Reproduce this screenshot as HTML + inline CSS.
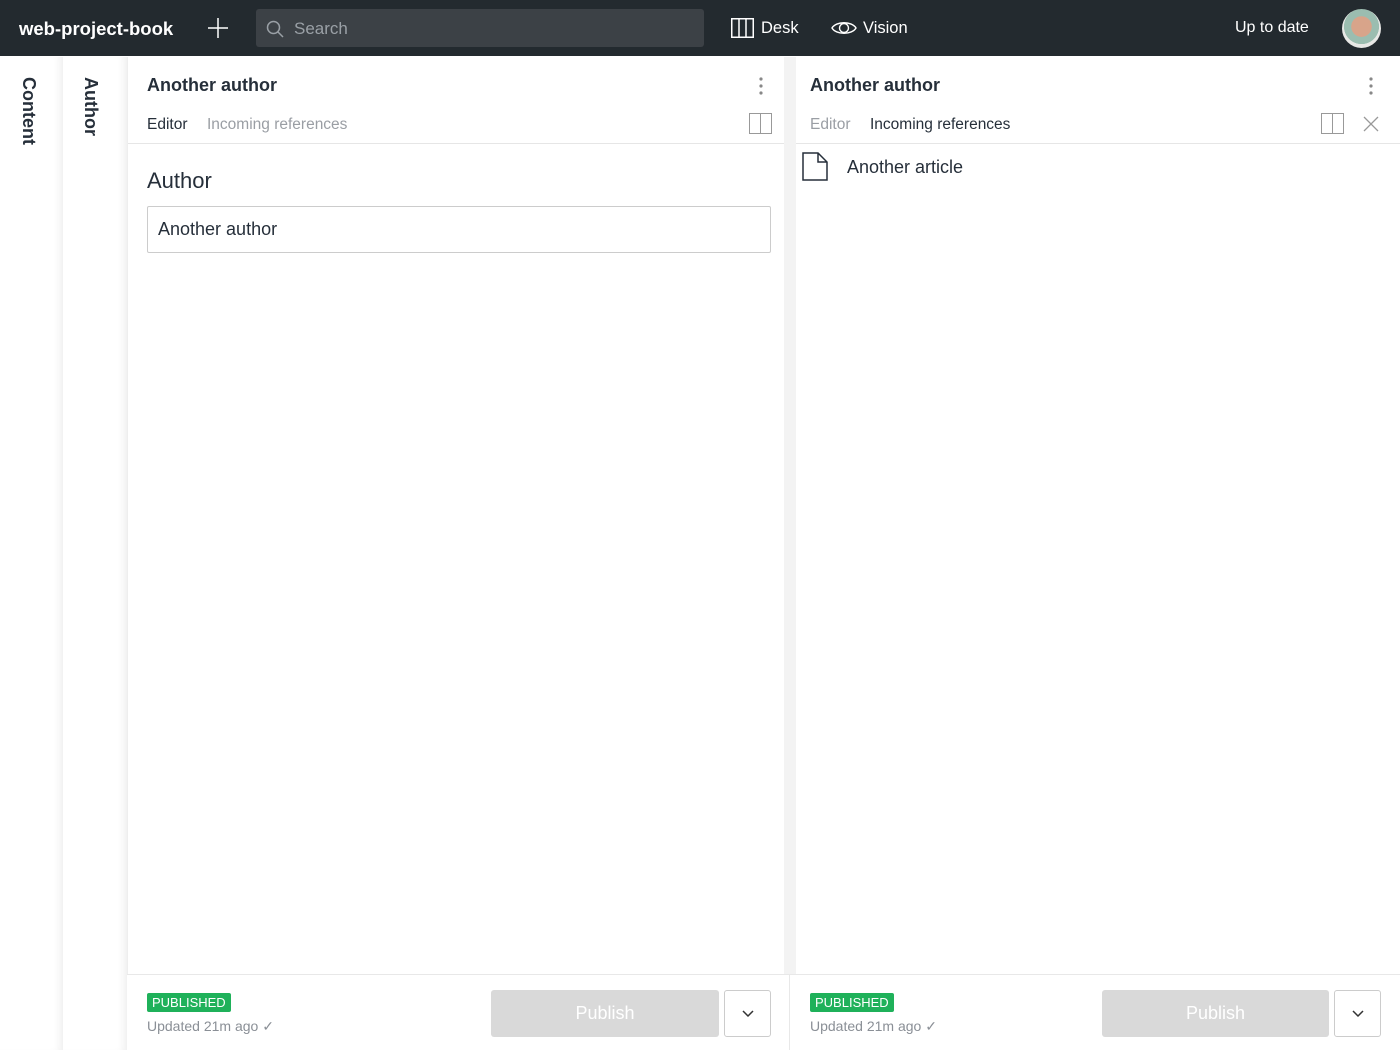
<!DOCTYPE html>
<html><head><meta charset="utf-8">
<style>
*{box-sizing:border-box;margin:0;padding:0}
body{width:1400px;height:1050px;overflow:hidden;font-family:"Liberation Sans",sans-serif;background:#fff;position:relative;color:#262f3a}
.top{position:absolute;left:0;top:0;width:1400px;height:56px;background:#232a2f;color:#fff}
.top .t{position:absolute;top:19px;font-size:17px}
.search{position:absolute;left:256px;top:9px;width:448px;height:38px;background:#3c4146;border-radius:3px}
.strip{position:absolute;top:57px;height:993px;width:64px;background:#fff;box-shadow:inset -8px 0 8px -5px rgba(0,0,0,.07)}
.vt{position:absolute;top:20px;font-size:18px;font-weight:bold;writing-mode:vertical-rl;color:#262f3a}
.h1{position:absolute;font-size:18px;font-weight:bold;top:75px}
.tab{position:absolute;top:116px;font-size:15.5px;font-weight:500}
.sep{position:absolute;left:784px;top:57px;width:12px;height:917px;background:#f3f3f3}
.hline{position:absolute;top:143px;height:1px;background:#e6e6e6}
.foot{position:absolute;top:974px;height:76px;border-top:1px solid #e8e8e8;background:#fff}
.badge{position:absolute;top:18px;left:20px;background:#1fb15a;color:#fff;font-size:13px;padding:2px 5px;border-radius:2px;height:19px;line-height:15px;font-weight:500}
.upd{position:absolute;top:43px;left:20px;color:#8a8f96;font-size:14px}
.pub{position:absolute;top:15px;height:47px;background:#d9d9d9;border-radius:3px;color:#fff;font-size:18px;text-align:center;line-height:47px}
.dd{position:absolute;top:15px;width:47px;height:47px;border:1px solid #ccc;border-radius:3px;background:#fff}
</style></head><body>
<div class="top">
<div class="t" style="left:19px;font-size:18.5px;top:18px;font-weight:600">web-project-book</div>
<svg style="position:absolute;left:207px;top:17px" width="22" height="22"><path d="M11 1V21M1 11H21" stroke="#fff" stroke-width="1.5"/></svg>
<div class="search"><svg style="position:absolute;left:10px;top:11px" width="18" height="18"><circle cx="7.5" cy="7.5" r="6" stroke="#9aa0a6" stroke-width="1.5" fill="none"/><path d="M12 12L17 17" stroke="#9aa0a6" stroke-width="1.5"/></svg><span style="position:absolute;left:38px;top:10px;font-size:17px;color:#9aa0a6">Search</span></div>
<svg style="position:absolute;left:731px;top:18px" width="23" height="20"><rect x=".75" y=".75" width="21.5" height="18.5" fill="none" stroke="#fff" stroke-width="1.5"/><path d="M8 1V19M15 1V19" stroke="#fff" stroke-width="1.5"/></svg>
<div class="t" style="left:761px;font-size:16.5px">Desk</div>
<svg style="position:absolute;left:831px;top:19px" width="26" height="18"><path d="M1 9C5 2 21 2 25 9C21 16 5 16 1 9Z" fill="none" stroke="#fff" stroke-width="1.4"/><circle cx="13" cy="9" r="4.5" fill="none" stroke="#fff" stroke-width="1.4"/></svg>
<div class="t" style="left:863px;font-size:16.5px">Vision</div>
<div class="t" style="left:1235px;font-size:16px">Up to date</div>
<div style="position:absolute;left:1342px;top:9px;width:39px;height:39px;border-radius:50%;background:radial-gradient(circle at 50% 45%,#d8a48a 0 35%,#9bbdb0 36% 60%,#e8e8e6 61%)"></div>
</div>
<div class="strip" style="left:0;width:63px"><div class="vt" style="left:18px">Content</div></div>
<div class="strip" style="left:63px"><div class="vt" style="left:17px">Author</div></div>
<div style="position:absolute;left:127px;top:57px;width:1px;height:993px;background:#eee"></div>
<div class="h1" style="left:147px">Another author</div>
<svg style="position:absolute;left:758px;top:76px" width="6" height="20"><circle cx="3" cy="3" r="1.6" fill="#888"/><circle cx="3" cy="10" r="1.6" fill="#888"/><circle cx="3" cy="17" r="1.6" fill="#888"/></svg>
<div class="tab" style="left:147px">Editor</div>
<div class="tab" style="left:207px;color:#9a9ea4">Incoming references</div>
<svg style="position:absolute;left:749px;top:113px" width="24" height="22"><rect x=".5" y=".5" width="22" height="20" fill="none" stroke="#999"/><path d="M11.5 1V21" stroke="#999"/></svg>
<div class="hline" style="left:128px;width:656px"></div>
<div style="position:absolute;left:147px;top:168px;font-size:22px">Author</div>
<div style="position:absolute;left:147px;top:206px;width:624px;height:47px;border:1px solid #ccc;border-radius:2px;font-size:18px;padding:12px 10px">Another author</div>
<div class="sep"></div>
<div class="h1" style="left:810px">Another author</div>
<svg style="position:absolute;left:1368px;top:76px" width="6" height="20"><circle cx="3" cy="3" r="1.6" fill="#888"/><circle cx="3" cy="10" r="1.6" fill="#888"/><circle cx="3" cy="17" r="1.6" fill="#888"/></svg>
<div class="tab" style="left:810px;color:#9a9ea4">Editor</div>
<div class="tab" style="left:870px">Incoming references</div>
<svg style="position:absolute;left:1321px;top:113px" width="24" height="22"><rect x=".5" y=".5" width="22" height="20" fill="none" stroke="#999"/><path d="M11.5 1V21" stroke="#999"/></svg>
<svg style="position:absolute;left:1363px;top:116px" width="16" height="16"><path d="M1 1L15 15M15 1L1 15" stroke="#999" stroke-width="1.3"/></svg>
<div class="hline" style="left:796px;width:604px"></div>
<svg style="position:absolute;left:802px;top:152px" width="26" height="29"><path d="M1 1H16L25 10V28H1Z M16 1V10H25" fill="none" stroke="#262f3a" stroke-width="1.5"/></svg>
<div style="position:absolute;left:847px;top:157px;font-size:18px">Another article</div>
<div class="foot" style="left:127px;width:663px;border-right:1px solid #e8e8e8">
<div class="badge">PUBLISHED</div><div class="upd">Updated 21m ago ✓</div>
<div class="pub" style="left:364px;width:228px">Publish</div>
<div class="dd" style="left:597px"><svg style="position:absolute;left:17px;top:19px" width="12" height="8"><path d="M1 1L6 6L11 1" fill="none" stroke="#333" stroke-width="1.5"/></svg></div>
</div>
<div class="foot" style="left:790px;width:610px">
<div class="badge">PUBLISHED</div><div class="upd">Updated 21m ago ✓</div>
<div class="pub" style="left:312px;width:227px">Publish</div>
<div class="dd" style="left:544px"><svg style="position:absolute;left:17px;top:19px" width="12" height="8"><path d="M1 1L6 6L11 1" fill="none" stroke="#333" stroke-width="1.5"/></svg></div>
</div>
</body></html>
